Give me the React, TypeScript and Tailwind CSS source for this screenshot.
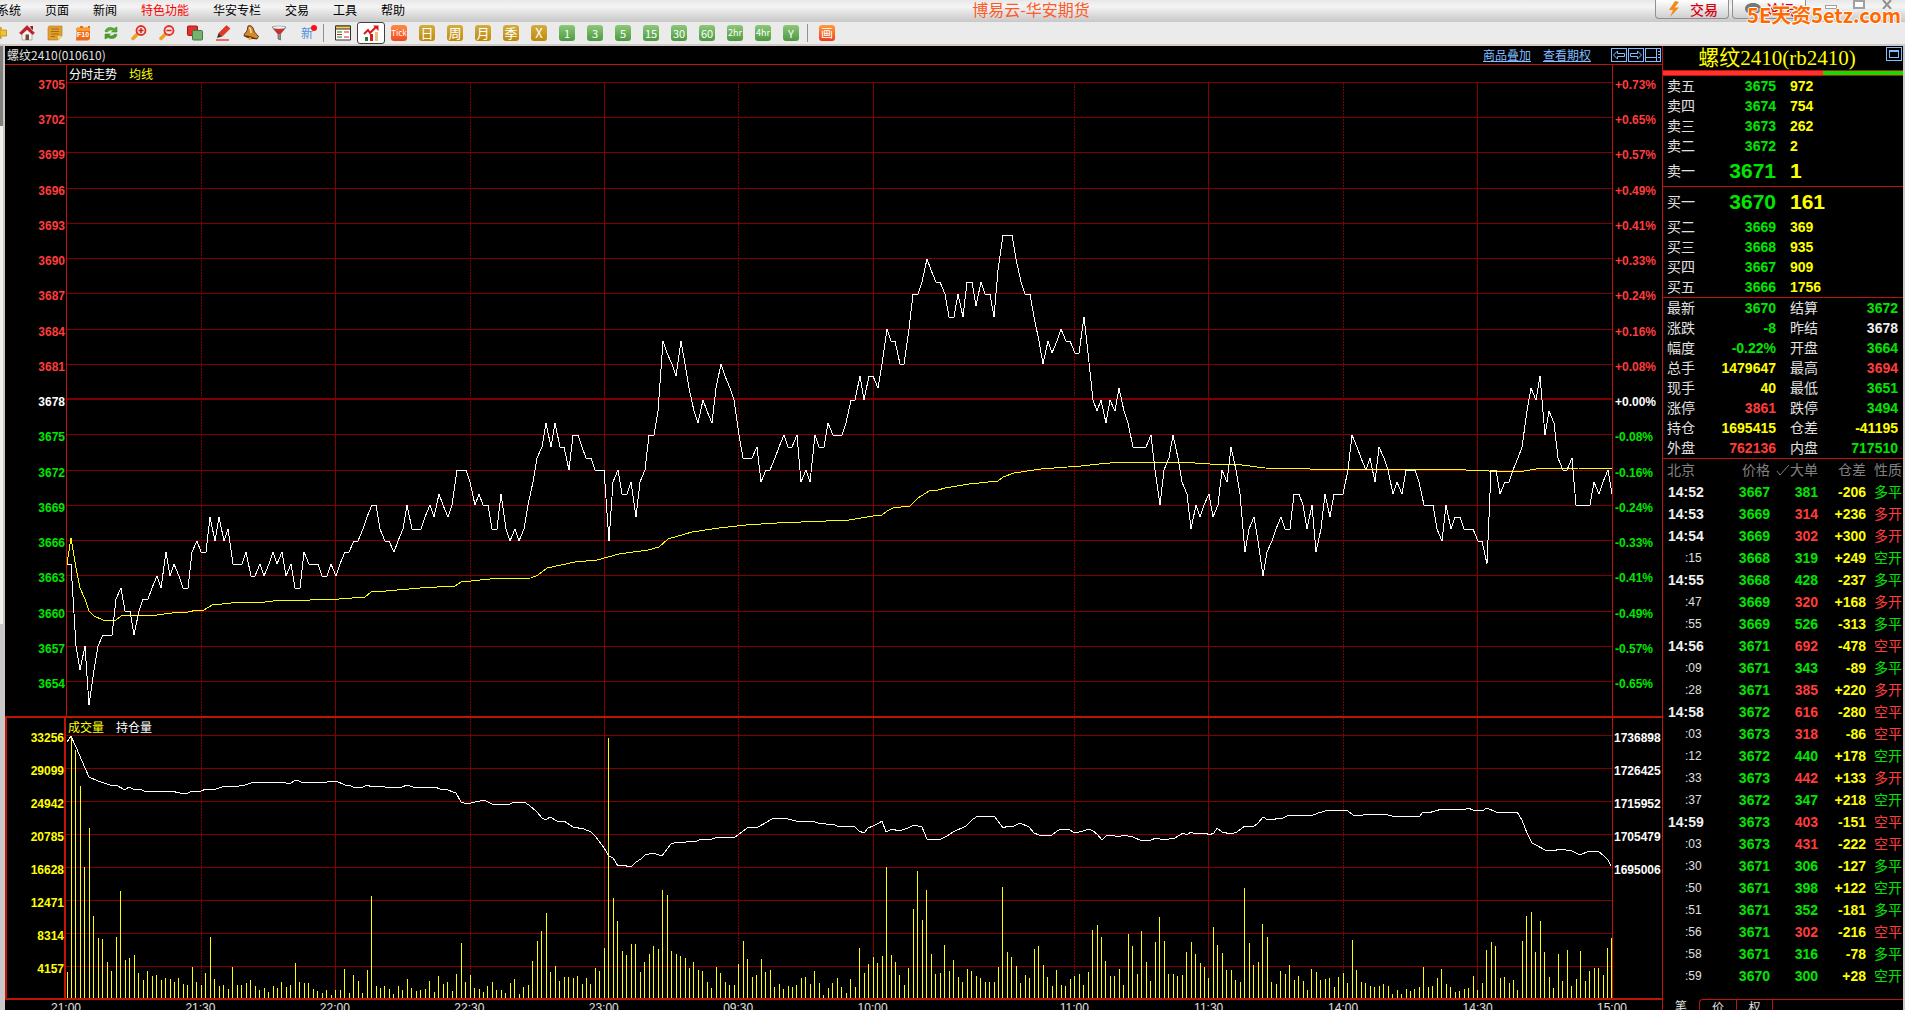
import type { ReactNode } from "react"
import clsx from "clsx"

const MINUTES = 345
const STEP = 1545 / MINUTES

const PRICES = [
  64, 64, 57, 55, 57, 52, 55, 57, 58, 58, 58, 61, 62, 60, 60, 58, 60, 61, 61, 62, 63, 62, 65, 63, 64, 63, 62, 62, 65, 66,
  65, 65, 68, 66, 68, 66, 67, 64, 64, 64, 65, 63, 63, 64, 63, 64, 65, 64, 65, 63, 64, 62, 62, 65, 64, 64, 64, 63, 63, 64,
  63, 64, 65, 65, 66, 66, 67, 68, 69, 69, 67, 66, 66, 65, 66, 67, 69, 67, 67, 67, 68, 69, 68, 70, 69, 68, 69, 72, 72, 72,
  71, 69, 70, 69, 69, 67, 67, 70, 67, 66, 67, 66, 67, 69, 71, 73, 74, 76, 74, 76, 74, 74, 72, 75, 75, 74, 73, 73, 72, 72,
  72, 66, 71, 72, 70, 70, 71, 68, 71, 72, 75, 75, 77, 83, 82, 81, 80, 83, 81, 79, 77, 76, 78, 77, 76, 79, 81, 80, 79, 78,
  75, 73, 73, 73, 74, 71, 72, 72, 73, 74, 75, 74, 74, 75, 71, 72, 71, 75, 74, 74, 76, 75, 75, 75, 76, 78, 78, 80, 78, 80,
  80, 79, 81, 84, 83, 83, 81, 81, 84, 87, 87, 88, 90, 89, 88, 88, 87, 85, 85, 87, 85, 88, 88, 86, 88, 87, 87, 85, 89, 92,
  92, 92, 90, 88, 87, 87, 85, 83, 81, 83, 82, 83, 84, 83, 83, 82, 82, 85, 82, 78, 77, 78, 76, 78, 77, 79, 77, 76, 74, 74,
  74, 74, 75, 72, 69, 72, 73, 75, 73, 71, 70, 67, 69, 68, 69, 70, 68, 69, 72, 71, 74, 72, 70, 65, 67, 68, 66, 63, 65, 66,
  67, 68, 67, 67, 70, 70, 69, 67, 69, 65, 67, 70, 68, 70, 70, 70, 72, 75, 74, 73, 72, 73, 71, 74, 73, 72, 70, 71, 70, 72,
  72, 72, 71, 69, 69, 69, 67, 66, 69, 67, 68, 68, 67, 67, 67, 66, 66, 64, 72, 72, 70, 71, 71, 72, 73, 74, 77, 79, 78, 80,
  75, 77, 76, 73, 72, 72, 73, 69, 69, 69, 69, 71, 70, 71, 72, 70,
]

const VOLUMES = [
  26, 260, 248, 212, 131, 170, 82, 60, 59, 36, 27, 61, 107, 38, 40, 43, 25, 18, 27, 22, 23, 18, 20, 19, 16, 20, 14, 13, 31, 16,
  13, 25, 61, 19, 12, 13, 9, 31, 13, 13, 15, 18, 12, 8, 10, 6, 12, 10, 16, 11, 13, 35, 16, 15, 15, 9, 7, 5, 8, 3,
  8, 8, 29, 5, 23, 17, 5, 28, 102, 12, 10, 12, 9, 4, 12, 8, 19, 10, 7, 8, 9, 17, 6, 22, 14, 16, 7, 24, 55, 16,
  23, 10, 9, 6, 12, 16, 8, 8, 5, 15, 19, 4, 11, 13, 37, 57, 67, 85, 26, 32, 17, 21, 21, 20, 22, 14, 20, 14, 30, 27,
  50, 260, 100, 77, 47, 43, 54, 54, 26, 36, 44, 52, 49, 108, 103, 47, 44, 42, 40, 30, 36, 28, 27, 16, 10, 31, 25, 16, 13, 13,
  34, 57, 39, 21, 23, 39, 26, 28, 11, 14, 9, 12, 11, 13, 20, 21, 14, 27, 15, 3, 10, 15, 20, 11, 5, 19, 11, 50, 25, 34,
  41, 35, 42, 131, 43, 36, 23, 13, 30, 89, 127, 78, 108, 44, 24, 25, 53, 27, 38, 21, 16, 29, 27, 22, 20, 16, 16, 16, 31, 111,
  46, 41, 32, 15, 23, 20, 49, 52, 33, 21, 12, 28, 13, 12, 19, 22, 24, 13, 26, 68, 73, 61, 37, 22, 22, 29, 13, 64, 52, 24,
  67, 36, 17, 56, 81, 57, 24, 24, 22, 23, 46, 56, 44, 35, 31, 20, 71, 53, 45, 28, 28, 18, 16, 110, 55, 33, 36, 74, 61, 16,
  14, 27, 24, 33, 18, 22, 17, 8, 29, 26, 18, 19, 20, 11, 21, 25, 15, 58, 28, 16, 15, 12, 11, 12, 14, 12, 4, 8, 4, 9,
  7, 9, 11, 31, 11, 12, 20, 29, 14, 11, 6, 7, 9, 10, 22, 8, 15, 48, 56, 52, 20, 21, 15, 18, 8, 57, 82, 86, 46, 77,
  46, 21, 10, 44, 17, 48, 12, 19, 47, 17, 27, 30, 30, 23, 50, 60,
]

const AVERAGE =
  "67,564 71,538 76,568 80,588 85,599 89,611 94,616 103,620 112,621 116,620 121,616 128,615 137,616 157,615 179,612 188,612 197,610 204,610 212,605 241,602 265,602 282,600 310,600 339,599 365,597 371,592 386,591 420,588 455,586 461,582 490,579 531,578 538,575 547,568 575,562 597,560 619,554 648,550 659,547 668,539 692,532 719,528 746,525 777,523 826,521 849,520 873,516 882,515 887,511 893,508 910,506 918,498 929,491 938,490 945,488 969,484 998,481 1003,477 1014,473 1041,469 1081,466 1099,464 1121,462 1180,462 1210,464 1242,465 1265,468 1310,469 1442,469 1489,471 1524,471 1542,468 1578,468 1612,469"

const INTEREST =
  "67,742 71,736 76,747 85,768 89,777 98,781 110,785 116,785 125,790 129,787 135,790 139,789 147,792 152,791 171,791 180,793 188,793 192,791 201,791 206,789 216,789 222,787 229,786 233,787 245,785 251,783 273,782 278,783 282,782 286,783 291,783 296,780 304,783 313,782 318,783 336,781 345,785 349,785 353,787 363,787 367,785 372,787 380,786 390,788 402,787 407,785 413,787 435,787 440,789 445,789 456,793 461,802 467,804 471,803 484,800 492,804 510,804 514,802 524,802 529,805 537,812 542,818 546,820 550,817 557,821 564,821 573,827 584,829 591,832 596,837 604,848 609,856 613,858 618,866 622,865 631,867 636,862 641,859 645,855 653,853 662,856 671,844 677,842 683,843 689,841 694,842 702,839 710,840 717,837 724,838 735,837 738,835 747,828 758,827 767,822 772,819 784,818 796,821 812,821 818,823 824,823 828,825 833,824 837,826 855,827 859,831 864,833 868,828 873,826 879,823 882,821 886,832 892,829 899,831 908,828 914,825 922,827 927,839 941,839 947,836 953,832 966,826 973,819 978,816 995,817 1003,828 1008,826 1012,827 1020,823 1029,827 1034,833 1039,835 1052,835 1057,831 1061,829 1068,829 1075,833 1083,831 1089,829 1093,831 1097,834 1102,840 1106,836 1111,835 1119,837 1123,835 1133,837 1142,841 1151,840 1156,838 1164,840 1175,838 1183,833 1187,835 1191,832 1195,834 1206,833 1209,835 1214,833 1217,828 1222,832 1231,834 1237,832 1245,826 1253,827 1258,823 1263,817 1268,820 1283,818 1289,815 1294,816 1307,815 1311,816 1318,813 1329,810 1334,811 1339,810 1348,811 1353,815 1357,816 1370,814 1377,815 1384,814 1392,816 1419,817 1423,812 1428,813 1442,809 1464,810 1468,808 1473,810 1482,811 1487,808 1496,812 1505,813 1517,812 1522,820 1527,833 1532,843 1536,845 1545,850 1553,851 1560,849 1572,851 1580,855 1589,851 1599,852 1603,855 1608,860 1611,866"

const TIMES = [
  { label: "21:00", minute: 0 },
  { label: "21:30", minute: 30 },
  { label: "22:00", minute: 60 },
  { label: "22:30", minute: 90 },
  { label: "23:00", minute: 120 },
  { label: "09:30", minute: 150 },
  { label: "10:00", minute: 180 },
  { label: "11:00", minute: 225 },
  { label: "11:30", minute: 255 },
  { label: "14:00", minute: 285 },
  { label: "14:30", minute: 315 },
  { label: "15:00", minute: 345 },
]

const PERCENTS = [
  "+0.73%", "+0.65%", "+0.57%", "+0.49%", "+0.41%", "+0.33%", "+0.24%", "+0.16%", "+0.08%",
  "+0.00%", "-0.08%", "-0.16%", "-0.24%", "-0.33%", "-0.41%", "-0.49%", "-0.57%", "-0.65%",
]

const UP = "text-[#ff3c3c]"
const DOWN = "text-[#00e600]"
const YELLOW = "text-[#ffff00]"
const WHITE = "text-[#f0f0f0]"

const ASKS = [
  ["卖五", "3675", "972"],
  ["卖四", "3674", "754"],
  ["卖三", "3673", "262"],
  ["卖二", "3672", "2"],
  ["卖一", "3671", "1"],
]

const BIDS = [
  ["买一", "3670", "161"],
  ["买二", "3669", "369"],
  ["买三", "3668", "935"],
  ["买四", "3667", "909"],
  ["买五", "3666", "1756"],
]

const STATS = [
  ["最新", "3670", DOWN, "结算", "3672", DOWN],
  ["涨跌", "-8", DOWN, "昨结", "3678", WHITE],
  ["幅度", "-0.22%", DOWN, "开盘", "3664", DOWN],
  ["总手", "1479647", YELLOW, "最高", "3694", UP],
  ["现手", "40", YELLOW, "最低", "3651", DOWN],
  ["涨停", "3861", UP, "跌停", "3494", DOWN],
  ["持仓", "1695415", YELLOW, "仓差", "-41195", YELLOW],
  ["外盘", "762136", UP, "内盘", "717510", DOWN],
]

// time, price, size, change in open interest, kind
const TICKS = [
  ["14:52", "3667", "381", "-206", "多平", DOWN],
  ["14:53", "3669", "314", "+236", "多开", UP],
  ["14:54", "3669", "302", "+300", "多开", UP],
  [":15", "3668", "319", "+249", "空开", DOWN],
  ["14:55", "3668", "428", "-237", "多平", DOWN],
  [":47", "3669", "320", "+168", "多开", UP],
  [":55", "3669", "526", "-313", "多平", DOWN],
  ["14:56", "3671", "692", "-478", "空平", UP],
  [":09", "3671", "343", "-89", "多平", DOWN],
  [":28", "3671", "385", "+220", "多开", UP],
  ["14:58", "3672", "616", "-280", "空平", UP],
  [":03", "3673", "318", "-86", "空平", UP],
  [":12", "3672", "440", "+178", "空开", DOWN],
  [":33", "3673", "442", "+133", "多开", UP],
  [":37", "3672", "347", "+218", "空开", DOWN],
  ["14:59", "3673", "403", "-151", "空平", UP],
  [":03", "3673", "431", "-222", "空平", UP],
  [":30", "3671", "306", "-127", "多平", DOWN],
  [":50", "3671", "398", "+122", "空开", DOWN],
  [":51", "3671", "352", "-181", "多平", DOWN],
  [":56", "3671", "302", "-216", "空平", UP],
  [":58", "3671", "316", "-78", "多平", DOWN],
  [":59", "3670", "300", "+28", "空开", DOWN],
]

const MENU = ["系统", "页面", "新闻", "特色功能", "华安专栏", "交易", "工具", "帮助"]

const timeX = (minute: number) => 67 + minute * STEP
const priceY = (price: number) => 82.5 + (3705 - price) * 11.745

function Icon({ children }: { children: ReactNode }) {
  return (
    <svg className="size-4" viewBox="0 0 16 16" fill="none" aria-hidden="true">
      {children}
    </svg>
  )
}

const DRAWN_TOOLS = [
  {
    name: "首页",
    icon: (
      <Icon>
        <path d="M3 8v7h10V8L8 4z" fill="#f5f0f0" stroke="#8a8a8a" strokeWidth="0.6" />
        <path d="M8 0.5L0.5 8l2 1.5L8 4.5 13.500 9.500l2-1.500z" fill="#c81e28" stroke="#7e0c14" strokeWidth="0.5" />
        <path d="M11.500 1h2.500v4l-2.500-2z" fill="#a01820" />
        <path d="M6.500 9.500h3.500V15H6.500z" fill="#7a4a28" />
      </Icon>
    ),
  },
  {
    name: "公告",
    icon: (
      <Icon>
        <path d="M2 1h13v10l-4 4H1V3z" fill="#e0a030" stroke="#b87818" strokeWidth="0.6" />
        <path d="M4 4h8M4 6.500h8M4 9h8M4 11.500h4" stroke="#a86c10" />
        <path d="M15 11h-4v4z" fill="#f8d890" />
      </Icon>
    ),
  },
  {
    name: "F10",
    icon: (
      <Icon>
        <path d="M2 2.500h3V1h3v1.500h5V1h2v13l-2 1.500H1z" fill="#f06a18" />
        <path d="M1 3h14v3H1z" fill="#f8a030" />
        <text x="8" y="12" textAnchor="middle" fontFamily="Liberation Sans" fontSize="7" fontWeight="700" fill="#ffffff">
          F10
        </text>
      </Icon>
    ),
  },
  {
    name: "刷新",
    icon: (
      <Icon>
        <path d="M2 6.500C2.500 3 7 1 11 3.500L14 2v5H8.500L10.500 5.500C8 4.500 5.500 5 4.500 7z" fill="#58b030" stroke="#2f7d18" strokeWidth="0.5" />
        <path d="M14 9.500c-.5 3.500-5 5.500-9 3L2 14V9h5.500L5.500 10.500c2.500 1 5 .5 6-1.500z" fill="#4a9f28" stroke="#2f7d18" strokeWidth="0.500" />
      </Icon>
    ),
  },
  {
    name: "放大",
    icon: (
      <Icon>
        <path d="M7 8.500L2 13.500" stroke="#f0a020" strokeWidth="3.500" strokeLinecap="round" />
        <circle cx="10" cy="5.500" r="4.500" fill="#fde4e0" stroke="#e03028" strokeWidth="1.800" />
        <path d="M7.500 5.500h5M10 3v5" stroke="#d02020" strokeWidth="1.500" />
      </Icon>
    ),
  },
  {
    name: "缩小",
    icon: (
      <Icon>
        <path d="M7 8.500L2 13.500" stroke="#f0a020" strokeWidth="3.500" strokeLinecap="round" />
        <circle cx="10" cy="5.500" r="4.500" fill="#fde4e0" stroke="#e03028" strokeWidth="1.800" />
        <path d="M7.500 5.500h5" stroke="#d02020" strokeWidth="1.500" />
      </Icon>
    ),
  },
  {
    name: "叠加",
    icon: (
      <Icon>
        <rect x="0.500" y="1" width="10" height="9.500" rx="1" fill="#e03030" stroke="#a81818" />
        <rect x="5.500" y="5.500" width="10" height="9.500" rx="1" fill="#78b070" stroke="#3f7840" />
      </Icon>
    ),
  },
  {
    name: "画线",
    icon: (
      <Icon>
        <path d="M11.500 0.500l3.500 3L7 11.500l-3.500-3z" fill="#e83820" stroke="#a82010" strokeWidth="0.500" />
        <path d="M3.500 8.500L7 11.500 2 13z" fill="#303030" />
        <path d="M1 15h13" stroke="#f04030" strokeWidth="1.500" />
      </Icon>
    ),
  },
  {
    name: "预警",
    icon: (
      <Icon>
        <path d="M5 1c2-1 4 0 5 2l1.500 4 4 4.500-1.500 2.500-7-1-6-2 .5-2L4 6z" fill="#d08a30" stroke="#5c2c0c" strokeWidth="0.900" />
        <path d="M6 3c1.500 0 2 2 2 5" stroke="#ffe0a0" strokeWidth="1.500" />
        <path d="M1.500 10.500c4 0 8 1.500 12.500 3-5 1.500-10 0-12.500-3z" fill="#5c2c0c" />
        <circle cx="7" cy="13.500" r="1.600" fill="#f0a830" />
      </Icon>
    ),
  },
  {
    name: "选股",
    icon: (
      <Icon>
        <path d="M1 2h14L9.500 9v6L7 14V9z" fill="#909090" stroke="#505050" strokeWidth="0.600" />
        <path d="M2.500 4h11L9 9H7z" fill="#d82828" />
        <ellipse cx="8" cy="2.500" rx="6.500" ry="1.500" fill="#f4f4f4" stroke="#808080" strokeWidth="0.500" />
      </Icon>
    ),
  },
]

const PERIODS = [
  { label: "Tick", look: "bg-linear-to-b from-[#ff8a4a] to-[#f04a20] text-[8px]" },
  ...["日", "周", "月", "季", "X"].map((label) => ({
    label,
    look: "bg-linear-to-b from-[#d2ae40] to-[#c08a00] text-[13px]",
  })),
  ...["1", "3", "5", "15", "30", "60"].map((label) => ({
    label,
    look: "bg-linear-to-b from-[#8cc878] to-[#4e9a42] text-[11px]",
  })),
  ...["2hr", "4hr"].map((label) => ({
    label,
    look: "bg-linear-to-b from-[#8cc878] to-[#4e9a42] text-[9px]",
  })),
  { label: "Y", look: "bg-linear-to-b from-[#8cc878] to-[#4e9a42] text-[11px]" },
]

function MenuBar() {
  return (
    <header className="relative flex h-[22px] justify-between bg-linear-to-b from-[#e8e8e8] via-[#f4f4f4] via-30% to-[#c8c8c8]">
      <nav className="-ml-[3px] flex flex-1 gap-6">
        {MENU.map((item) => (
          <button
            key={item}
            className={clsx("h-5 whitespace-nowrap text-[12px]", item === "特色功能" ? "text-[#ff0000]" : "text-black")}
          >
            {item}
          </button>
        ))}
      </nav>
      <h1 className="ml-40 text-[16px] leading-[18px] text-[#ff5a28]">博易云-华安期货</h1>
      <div className="flex flex-1 justify-end gap-[3px]">
        <button className="flex h-[19px] w-[74px] items-center justify-center gap-2 rounded-b border border-t-0 border-[#909090] bg-linear-to-b from-white to-[#d0d0d0] text-[14px] font-medium text-[#d80010]">
          <svg className="size-4" viewBox="0 0 16 16" aria-hidden="true">
            <path d="M9 0L3 9h4l-3 7 9-9.500H8.500L13 1z" fill="#f08a18" />
          </svg>
          交易
        </button>
        <button className="flex h-[19px] w-[74px] items-center justify-center gap-1 rounded-b border border-t-0 border-[#909090] bg-linear-to-b from-white to-[#d0d0d0] text-[14px] font-medium text-[#d80010]">
          <svg className="h-4 w-[18px]" viewBox="0 0 18 16" aria-hidden="true">
            <path d="M9 2c5 0 8 2.500 8 5.500S14 13 9 13l-4 3v-3.500C2.500 12 1 10 1 7.500 1 4.500 4 2 9 2z" fill="#787878" />
          </svg>
          论坛
        </button>
        <div className="flex w-[96px] justify-between pr-3 pl-4">
          <button aria-label="最小化" className="mt-[5px] h-1 w-3 border border-[#a0a0a0] bg-white" />
          <button aria-label="最大化" className="h-[9px] w-3 border-2 border-[#a0a0a0] bg-white" />
          <button aria-label="关闭" className="h-[9px] w-3">
            <svg className="h-[9px] w-3" viewBox="0 0 12 9" aria-hidden="true">
              <path d="M2 0l8 9M10 0L2 9" stroke="#909090" strokeWidth="2" />
            </svg>
          </button>
        </div>
      </div>
      <div className="absolute top-[2px] right-1 z-10 text-[20px] leading-[26px] font-bold text-[#ff6a00] [text-shadow:1px_0_#fff,-1px_0_#fff,0_1px_#fff,0_-1px_#fff]">
        5E天资5etz.com
      </div>
    </header>
  )
}

function ToolBar() {
  return (
    <div className="flex h-6 items-center border-b-2 border-[#d2cac4] bg-[#ebebeb]">
      <button aria-label="返回" className="mr-1.5 h-4 w-[7px]">
        <svg className="h-4 w-[7px]" viewBox="0 0 7 16" aria-hidden="true">
          <path d="M0 3.500l1-1.500v3h5.500v6H1v3l-1-1.500z" fill="#f4c430" stroke="#b88a18" strokeWidth="0.800" />
        </svg>
      </button>
      {DRAWN_TOOLS.map((tool) => (
        <button key={tool.name} aria-label={tool.name} className="flex w-7 justify-center">
          {tool.icon}
        </button>
      ))}
      <button className="relative w-7 text-center text-[12px] leading-4 text-[#4a90d8]">
        新
        <span className="absolute top-0 right-1 size-1.5 rounded-full bg-[#ff1010]" />
      </button>
      <span className="ml-0.5 h-[18px] w-px bg-[#909090]" />
      <button aria-label="报价" className="ml-1 flex w-[29px] justify-center">
        <Icon>
          <path d="M0.500 1h15v14h-15z" fill="#fff" stroke="#303030" />
          <path d="M1 1h14v3H1z" fill="#f8d040" />
          <path d="M0.500 1h15v3h-15z" stroke="#303030" />
          <path d="M2 7h5M2 12h5" stroke="#108010" strokeWidth="1.200" />
          <path d="M9 7h5M9 12h5M2 9.500h5" stroke="#e02020" strokeWidth="1.200" />
        </Icon>
      </button>
      <button aria-label="分时" className="flex h-[22px] w-[28px] items-center justify-center rounded-[3px] border border-[#404040] bg-white">
        <Icon>
          <path d="M1 9l4-4 2 3 6-6" stroke="#e01818" strokeWidth="2" />
          <path d="M10 0.500h5.500V6z" fill="#e01818" />
          <path d="M2 12h3v4H2z" fill="#287830" />
          <path d="M7 9h3v7H7z" fill="#d02020" />
          <path d="M12 7h3v9h-3z" fill="#e8c080" />
        </Icon>
      </button>
      {PERIODS.map((period) => (
        <button key={period.label} className="flex w-7 justify-center">
          <span className={clsx("size-4 rounded-[3px] text-center leading-4 text-white", period.look)}>
            {period.label}
          </span>
        </button>
      ))}
      <span className="ml-0.5 h-[18px] w-px bg-[#909090]" />
      <button className="ml-[11px] size-4 rounded-[3px] bg-linear-to-b from-[#ff9a3c] to-[#ee3a20] text-[12px] leading-4 text-white">
        画
      </button>
    </div>
  )
}

function TimeGrid({ top, bottom }: { top: number; bottom: number }) {
  return (
    <>
      {TIMES.slice(1, -1).map((time) => {
        const x = Math.floor(timeX(time.minute)) + 0.5
        const dotted = ["21:30", "22:30", "09:30", "11:00", "14:00"].includes(time.label)
        return (
          <line key={time.label} x1={x} x2={x} y1={top} y2={bottom} stroke="#800000" strokeDasharray={dotted ? "2 1" : undefined} />
        )
      })}
    </>
  )
}

function PricePanel() {
  const levels = PERCENTS.map((_, i) => 3705 - i * 3)
  const tone = (i: number) => (i < 9 ? UP : i === 9 ? "text-white" : DOWN)
  const points = PRICES.map((price, i) => `${Math.round(timeX(i))},${Math.round(priceY(3600 + price))}`).join(" ")

  return (
    <section className="flex min-h-0">
      <ol className="flex w-[61px] flex-col justify-between pt-3 pr-px pb-6 text-right font-['Liberation_Sans',sans-serif] text-[12px] leading-4 font-bold">
        {levels.map((level, i) => (
          <li key={level} className={tone(i)}>{level}</li>
        ))}
      </ol>
      <div className="relative min-w-0 flex-1 border-x border-[#c01408]">
        <svg className="block h-full w-full" viewBox="67 65 1545 651" preserveAspectRatio="none" shapeRendering="crispEdges">
          <TimeGrid top={83} bottom={716} />
          {levels.map((level) => (
            <line
              key={level}
              x1="67"
              x2="1612"
              y1={level === 3678 ? 399 : Math.floor(priceY(level)) + 0.5}
              y2={level === 3678 ? 399 : Math.floor(priceY(level)) + 0.5}
              stroke="#800000"
              strokeWidth={level === 3678 ? 2 : 1}
            />
          ))}
          <polyline points={AVERAGE} fill="none" stroke="#ffff00" />
          <polyline points={points} fill="none" stroke="#ffffff" />
        </svg>
        <div className="absolute top-0 left-0.5 flex gap-3 text-[12px] leading-[18px]">
          <span className="text-white">分时走势</span>
          <span className={YELLOW}>均线</span>
        </div>
      </div>
      <ol className="flex w-[49px] flex-col justify-between pt-3 pb-6 pl-0.5 font-['Liberation_Sans',sans-serif] text-[12px] leading-4 font-bold">
        {PERCENTS.map((percent, i) => (
          <li key={percent} className={tone(i)}>{percent}</li>
        ))}
      </ol>
    </section>
  )
}

function VolumePanel() {
  return (
    <section className="flex min-h-0 border-y-2 border-[#c01408]">
      <ol className="flex w-[61px] flex-col justify-between border-x-2 border-[#c01408] pt-3 pb-[21px] text-right font-['Liberation_Sans',sans-serif] text-[12px] leading-4 font-bold text-[#ffff00]">
        {[33256, 29099, 24942, 20785, 16628, 12471, 8314, 4157].map((level) => (
          <li key={level}>{level}</li>
        ))}
      </ol>
      <div className="relative min-w-0 flex-1 border-r border-[#c01408]">
        <svg className="block h-full w-full" viewBox="66 718 1546 280" preserveAspectRatio="none" shapeRendering="crispEdges">
          <TimeGrid top={718} bottom={998} />
          {[735, 768, 801, 834, 867, 900, 933, 966].map((y) => (
            <line key={y} x1="66" x2="1612" y1={y + 0.5} y2={y + 0.5} stroke="#800000" />
          ))}
          {VOLUMES.map((height, i) => (
            <rect key={i} x={Math.min(Math.floor(timeX(i)), 1611)} y={998 - height} width="1" height={height} fill="#ffff00" />
          ))}
          <polyline points={INTEREST} fill="none" stroke="#ffffff" />
        </svg>
        <div className="absolute top-0 left-0.5 flex gap-3 text-[12px] leading-[18px]">
          <span className={YELLOW}>成交量</span>
          <span className="text-white">持仓量</span>
        </div>
      </div>
      <ol className="flex w-[49px] flex-col gap-[17px] pt-3 pl-px font-['Liberation_Sans',sans-serif] text-[12px] leading-4 font-bold text-white">
        {[1736898, 1726425, 1715952, 1705479, 1695006].map((level) => (
          <li key={level}>{level}</li>
        ))}
      </ol>
    </section>
  )
}

function Chart() {
  return (
    <main className="grid min-w-0 flex-1 grid-rows-[19px_651fr_284fr_10px]">
      <div className="flex items-center gap-3 border-b border-[#c01408] pr-px pl-0.5 text-[12px] leading-[18px]">
        <h2 className="flex-1 text-[#e0e0e0]">螺纹2410(010610)</h2>
        <a href="#overlay" className="text-[#80bcff] underline">商品叠加</a>
        <a href="#options" className="text-[#80bcff] underline">查看期权</a>
        <div className="ml-2 flex gap-px">
          <button aria-label="上一个" className="h-3.5 w-4 border border-[#80bcff]">
            <svg className="block" viewBox="0 0 14 12" fill="none" stroke="#80bcff" aria-hidden="true">
              <path d="M1.500 6l4-4v2.500h7v3h-7V10z" />
            </svg>
          </button>
          <button aria-label="下一个" className="h-3.5 w-4 border border-[#80bcff]">
            <svg className="block" viewBox="0 0 14 12" fill="none" stroke="#80bcff" aria-hidden="true">
              <path d="M12.500 6l-4-4v2.500h-7v3h7V10z" />
            </svg>
          </button>
          <button aria-label="布局" className="h-3.5 w-4 border border-[#80bcff]">
            <svg className="block" viewBox="0 0 14 12" fill="none" stroke="#80bcff" aria-hidden="true">
              <path d="M0 8.500h10M10.500 0v12M12 2.500h2M12 5.500h2M12 8.500h2" />
            </svg>
          </button>
        </div>
      </div>
      <PricePanel />
      <VolumePanel />
      <div className="flex overflow-hidden">
        <div className="relative mr-[50px] ml-[61px] flex-1">
          {TIMES.map((time) => (
            <span
              key={time.label}
              className="absolute top-0 -translate-x-1/2 font-['Liberation_Sans',sans-serif] text-[12px] leading-4 text-[#e0e0e0]"
              style={{ left: `${(time.minute / MINUTES) * 100}%` }}
            >
              {time.label}
            </span>
          ))}
        </div>
      </div>
    </main>
  )
}

function Book({ rows, best }: { rows: string[][]; best: string }) {
  return (
    <table className="w-full table-fixed border-b border-[#c01408]">
      <tbody>
        {rows.map(([name, price, size]) => (
          <tr key={name} className={name === best ? "h-[30px] text-[21px]" : "h-5 text-[14px]"}>
            <th className="w-10 p-0 pl-1 text-left text-[14px] font-normal text-[#e0e0e0]">{name}</th>
            <td className={clsx("w-[73px] p-0 text-right font-bold", DOWN)}>{price}</td>
            <td className={clsx("p-0 pl-3.5 font-bold", YELLOW)}>{size}</td>
          </tr>
        ))}
      </tbody>
    </table>
  )
}

function QuotePanel() {
  return (
    <aside className="flex w-[241px] shrink-0 flex-col border-l border-[#c01408] font-['Liberation_Sans','Noto_Sans_CJK_SC',sans-serif] text-[14px] leading-5">
      <div className="relative h-6 text-center">
        <h2 className="pr-3 font-['Liberation_Serif','Noto_Sans_CJK_SC',serif] text-[21px] leading-6 text-[#ffff00]">
          螺纹2410(rb2410)
        </h2>
        <button aria-label="放大窗口" className="absolute top-px right-px flex h-3.5 w-4 items-center justify-center border border-[#80bcff]">
          <span className="h-2 w-2.5 border border-t-2 border-[#80bcff]" />
        </button>
      </div>
      <div className="flex h-1.5 border-y border-[#c01408]">
        <div className="w-2/3 bg-[#ff3232]" />
        <div className="w-1/3 bg-[#00e600]" />
      </div>
      <Book rows={ASKS} best="卖一" />
      <Book rows={BIDS} best="买一" />
      <table className="w-full table-fixed border-b border-[#c01408]">
        <tbody>
          {STATS.map(([name, value, look, name2, value2, look2]) => (
            <tr key={name} className="h-5">
              <th className="w-10 p-0 pl-1 text-left font-normal text-[#e0e0e0]">{name}</th>
              <td className={clsx("w-[73px] p-0 text-right font-bold", look)}>{value}</td>
              <th className="w-[52px] p-0 pl-3.5 text-left font-normal whitespace-nowrap text-[#e0e0e0]">{name2}</th>
              <td className={clsx("p-0 pr-[5px] text-right font-bold", look2)}>{value2}</td>
            </tr>
          ))}
        </tbody>
      </table>
      <table className="w-full table-fixed">
        <thead>
          <tr className="h-[22px] text-[#808080]">
            <th className="w-[46px] p-0 pl-1 text-left font-normal">北京</th>
            <th className="w-[61px] p-0 text-right font-normal">价格</th>
            <th className="w-12 p-0 font-normal whitespace-nowrap">
              <span className="flex items-center justify-end">
                <svg className="h-3 w-3.5" viewBox="0 0 14 12" fill="none" stroke="#808080" aria-hidden="true">
                  <path d="M1 7l3 4L13 1" />
                </svg>
                大单
              </span>
            </th>
            <th className="w-12 p-0 text-right font-normal">仓差</th>
            <th className="p-0 pr-px text-right font-normal whitespace-nowrap">性质</th>
          </tr>
        </thead>
        <tbody>
          {TICKS.map(([time, price, size, change, kind, look], i) => (
            <tr key={i} className="h-[22px] font-bold">
              {time.length === 5 ? (
                <td className="p-0 pl-[5px] text-[#f0f0f0]">{time}</td>
              ) : (
                <td className="p-0 pl-[22px] text-[12px] font-normal text-[#e0e0e0]">{time}</td>
              )}
              <td className={clsx("p-0 text-right", DOWN)}>{price}</td>
              <td className={clsx("p-0 text-right", look)}>{size}</td>
              <td className={clsx("p-0 text-right", YELLOW)}>{change}</td>
              <td className={clsx("p-0 pr-px text-right font-normal whitespace-nowrap", look)}>{kind}</td>
            </tr>
          ))}
        </tbody>
      </table>
      <div className="mt-auto flex h-[11px] overflow-hidden text-[12px] leading-4 text-[#e0e0e0]">
        <button className="h-4 w-9">笔</button>
        <button className="h-4 w-[37px] rounded-tl border-t border-l border-[#c01408]">价</button>
        <button className="h-4 w-9 border-t border-l border-[#c01408]">权</button>
        <span className="h-4 flex-1 border-t border-l border-[#c01408]" />
      </div>
    </aside>
  )
}

export default function App() {
  return (
    <div className="flex h-screen flex-col overflow-hidden bg-black font-['Noto_Sans_CJK_SC',sans-serif]">
      <MenuBar />
      <ToolBar />
      <div className="flex min-h-0 flex-1">
        <div className="flex w-[5px] flex-col border-r-2 border-[#cfc8c2]">
          <div className="h-20 bg-[#808080]" />
          <div className="flex-1 bg-[#f0f0ec]" />
          <div className="h-2/5 bg-[#c8c8cc]" />
        </div>
        <Chart />
        <QuotePanel />
        <div className="w-0.5 bg-[#cfc8c2]" />
      </div>
    </div>
  )
}
